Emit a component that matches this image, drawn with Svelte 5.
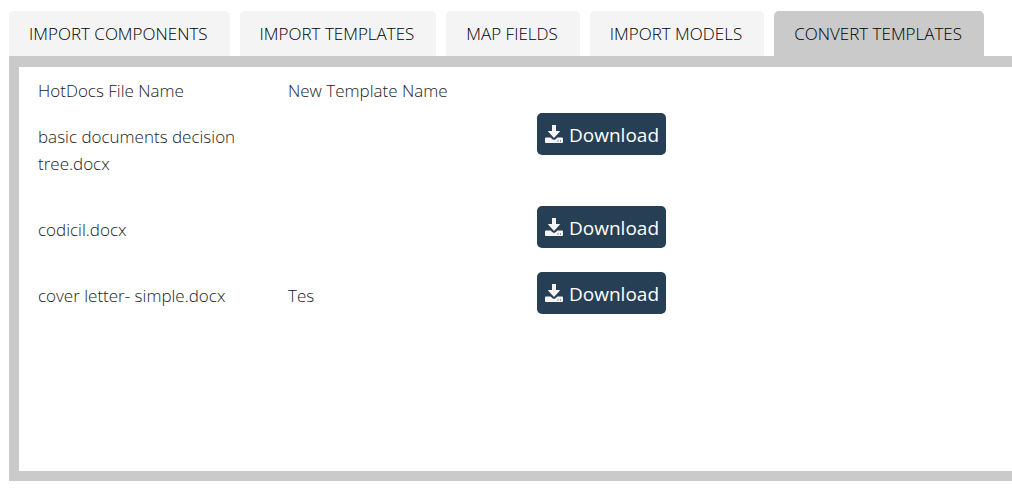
<script>
  const tabs = ['IMPORT COMPONENTS', 'IMPORT TEMPLATES', 'MAP FIELDS', 'IMPORT MODELS', 'CONVERT TEMPLATES'];
  let active = $state(4);
  const rows = [
    { file: 'basic documents decision tree.docx', name: '' },
    { file: 'codicil.docx', name: '' },
    { file: 'cover letter- simple.docx', name: 'Tes' }
  ];
</script>

<main>
  <nav>
    {#each tabs as tab, i}
      <button class="tab" class:active={active === i} onclick={() => (active = i)}>{tab}</button>
    {/each}
  </nav>
  <section>
    <table>
      <colgroup><col class="file" /><col class="name" /><col /></colgroup>
      <thead>
        <tr><th>HotDocs File Name</th><th>New Template Name</th><td></td></tr>
      </thead>
      <tbody>
        {#each rows as row}
          <tr>
            <td><p>{row.file}</p></td>
            <td><p>{row.name}</p></td>
            <td>
              <button class="download">
                <svg viewBox="0 0 18 18" aria-hidden="true">
                  <path d="M7 0h4v6h3.500q.8 0 .2.700L9.500 12.500q-.5.500-1 0L3.300 6.700Q2.700 6 3.500 6H7zM1 12.500h4.500l2 1.700q1.500 1.200 3 0l2-1.700H17q1 0 1 1V17q0 1-1 1H1q-1 0-1-1v-3.500q0-1 1-1zM12.500 15.500v1h1v-1zM15 15.500v1h1v-1z" fill-rule="evenodd" />
                </svg>
                Download
              </button>
            </td>
          </tr>
        {/each}
      </tbody>
    </table>
  </section>
</main>

<style>
  :global(body) { background: #fff; }
  main { padding: 11px 0 12px 9px; font-family: "Open Sans", sans-serif; overflow: hidden; }
  nav { display: flex; gap: 10px; }
  button { font-family: inherit; border: 0; cursor: pointer; white-space: nowrap; }
  .tab { height: 45px; padding: 0 22px 0 20px; border-radius: 5px 5px 0 0; background: #f4f4f4; color: #000; font-size: 17px; font-weight: 300; }
  .tab.active { background: #cacaca; }
  section { box-sizing: border-box; min-height: 425px; border: solid #cacaca; border-width: 11px 0 10px 10px; padding: 11px 19px; }
  table { width: 100%; table-layout: fixed; border-collapse: collapse; color: #222; font-size: 17px; line-height: 27px; }
  .file { width: 250px; }
  .name { width: 249px; }
  th, td { padding: 0; text-align: left; vertical-align: top; font-weight: 300; }
  th { padding-bottom: 10px; line-height: 25px; }
  p { margin: 0; padding: 10px 40px 29px 0; }
  .download { display: flex; align-items: center; gap: 6px; height: 42px; padding: 1px 7px 0 8px; border-radius: 5px; background: #263f54; color: #fff; font-size: 19px; }
  svg { width: 18px; height: 18px; margin-bottom: 2px; fill: #f4f4f4; }
</style>
